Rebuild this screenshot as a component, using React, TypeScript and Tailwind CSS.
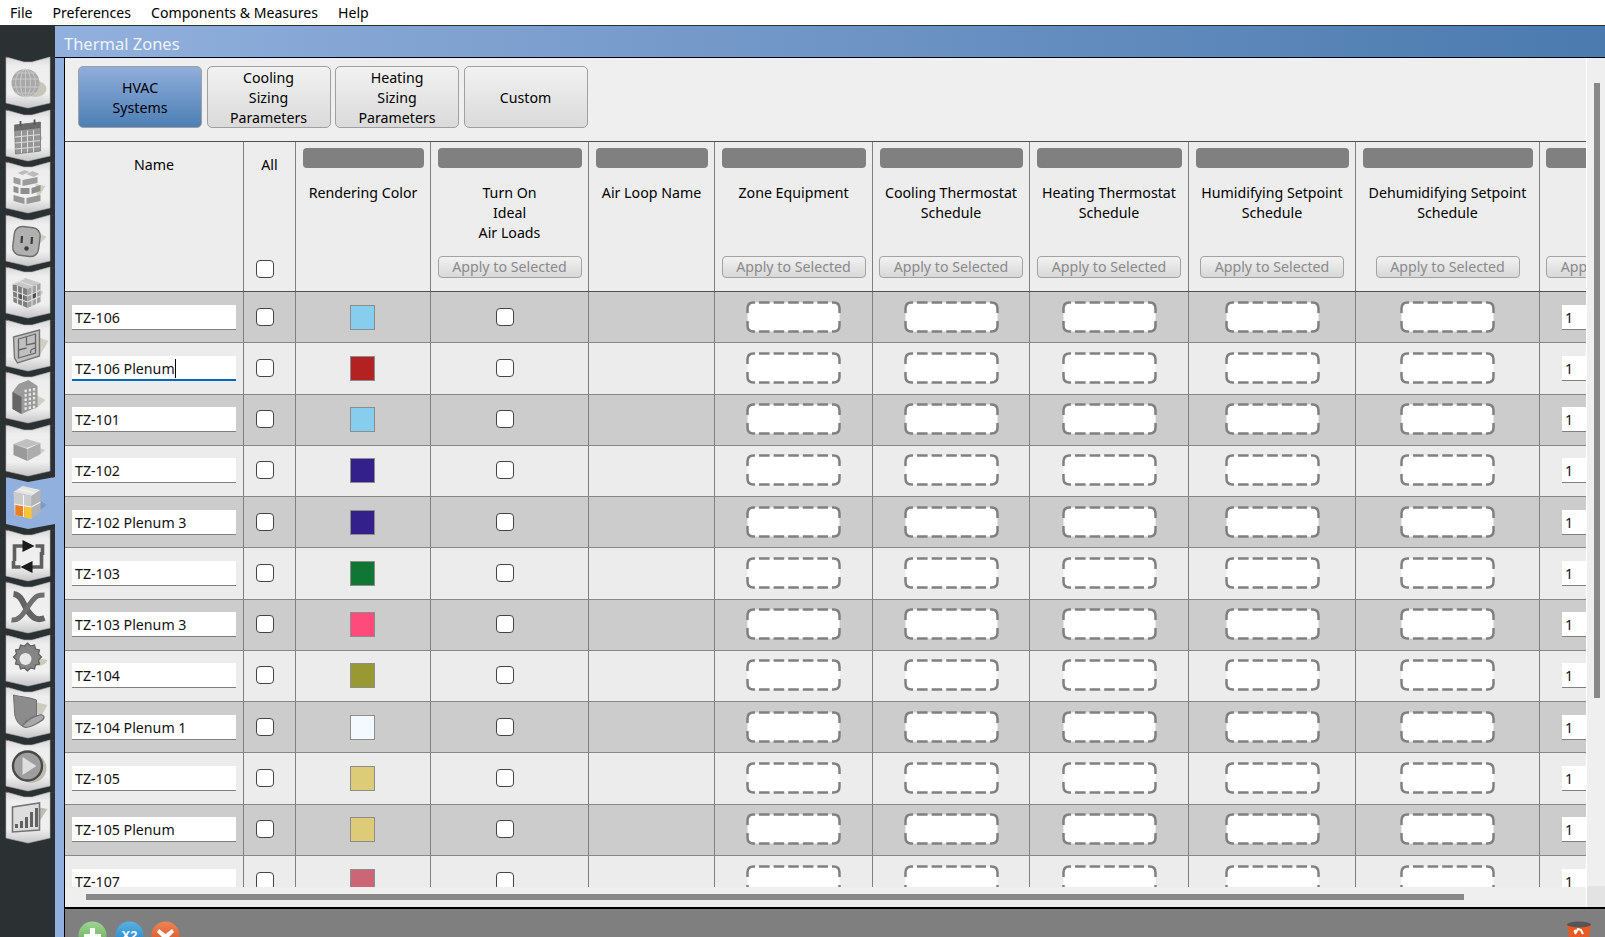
import React from "react";

const font = "[font-family:'Noto_Sans','Open_Sans',sans-serif]";

type Col = { w: string; title: string[]; apply: boolean; kind: string };
const cols: Col[] = [
  { w: "w-[135px]", title: ["Rendering Color"], apply: false, kind: "color" },
  { w: "w-[158px]", title: ["Turn On", "Ideal", "Air Loads"], apply: true, kind: "check" },
  { w: "w-[126px]", title: ["Air Loop Name"], apply: false, kind: "empty" },
  { w: "w-[158px]", title: ["Zone Equipment"], apply: true, kind: "drop" },
  { w: "w-[157px]", title: ["Cooling Thermostat", "Schedule"], apply: true, kind: "drop" },
  { w: "w-[159px]", title: ["Heating Thermostat", "Schedule"], apply: true, kind: "drop" },
  { w: "w-[167px]", title: ["Humidifying Setpoint", "Schedule"], apply: true, kind: "drop" },
  { w: "w-[184px]", title: ["Dehumidifying Setpoint", "Schedule"], apply: true, kind: "drop" },
];

const rows: { name: string; color: string; focus?: boolean }[] = [
  { name: "TZ-106", color: "bg-[#87ceee]" },
  { name: "TZ-106 Plenum", color: "bg-[#b22222]", focus: true },
  { name: "TZ-101", color: "bg-[#87ceee]" },
  { name: "TZ-102", color: "bg-[#34208a]" },
  { name: "TZ-102 Plenum 3", color: "bg-[#34208a]" },
  { name: "TZ-103", color: "bg-[#107636]" },
  { name: "TZ-103 Plenum 3", color: "bg-[#ff4a7c]" },
  { name: "TZ-104", color: "bg-[#999933]" },
  { name: "TZ-104 Plenum 1", color: "bg-[#f4f9ff]" },
  { name: "TZ-105", color: "bg-[#ddcc77]" },
  { name: "TZ-105 Plenum", color: "bg-[#ddcc77]" },
  { name: "TZ-107", color: "bg-[#cc6677]" },
];

function Check() {
  return <div className="w-[18px] h-[18px] shrink-0 rounded-[4px] border-[1.5px] border-[#444] bg-white" />;
}

function Dashed() {
  return (
    <svg width="95" height="32" viewBox="0 0 95 32" className="block shrink-0 -mt-[1px]">
      <rect x="1.500" y="1.500" width="92" height="29" rx="6" fill="#fff" />
      <g fill="none" stroke="#808080" strokeWidth="2.500">
        <path d="M1.500 12V7.500Q1.500 1.500 7.500 1.500H9M86 1.500H87.500Q93.500 1.500 93.500 7.500V12M93.500 20V24.500Q93.500 30.500 87.500 30.500H86M9 30.500H7.500Q1.500 30.500 1.500 24.500V20" />
        <path d="M13 1.500H82M13 30.500H82" strokeDasharray="10.600 4" />
      </g>
    </svg>
  );
}

function ApplyButton() {
  return (
    <div className="w-[144px] h-[22px] shrink-0 rounded-[4px] border border-[#a3a3a3] bg-gradient-to-b from-[#f2f2f2] to-[#d8d8d8] text-[#8a8a8a] text-[14.200px] leading-[20px] text-center whitespace-nowrap overflow-hidden">
      Apply to Selected
    </div>
  );
}

function HeaderCell({ c }: { c: Col }) {
  return (
    <div className={`${c.w} shrink-0 border-r border-[#808080] flex flex-col items-center pt-[6px]`}>
      <div className="w-full pl-[7px] pr-[6px]">
        <div className="h-[20px] rounded-[4px] bg-[#808080]" />
      </div>
      <div className="mt-[15px] text-center text-[14.200px] leading-[20px] text-black whitespace-nowrap">
        {c.title.map((t) => (
          <div key={t}>{t}</div>
        ))}
      </div>
      {c.apply && (
        <div className="mt-auto mb-[13px]">
          <ApplyButton />
        </div>
      )}
    </div>
  );
}

function Row({ r, i }: { r: (typeof rows)[number]; i: number }) {
  const bg = i % 2 === 0 ? "bg-[#cccccc]" : "bg-[#ececec]";
  return (
    <div className={`${bg} h-[51.27px] shrink-0 flex border-b-[1.5px] border-[#888888] text-[14.200px] text-[#111]`}>
      <div className="w-[179px] shrink-0 border-r border-[#808080] flex items-center pl-[6.500px]">
        <div
          className={`w-[164px] h-[25px] bg-white pl-[3.500px] leading-[25px] whitespace-nowrap ${
            r.focus ? "border-b-2 border-[#0067c0]" : "border-b-[1.5px] border-[#808080]"
          }`}
        >
          {r.focus ? <span className="border-r border-black">{r.name}</span> : r.name}
        </div>
      </div>
      <div className="w-[52px] shrink-0 border-r border-[#808080] flex items-center pl-[12px] pb-[1px]">
        <Check />
      </div>
      {cols.map((c) => (
        <div
          key={c.title[0]}
          className={`${c.w} shrink-0 border-r border-[#808080] flex items-center ${
            c.kind === "check" ? "pl-[65px] pb-[1px]" : c.kind === "color" ? "justify-center pr-[2px]" : "justify-center"
          }`}
        >
          {c.kind === "color" && <div className={`w-[25px] h-[25px] border-[1.5px] border-[#8d8d8d] ${r.color}`} />}
          {c.kind === "check" && <Check />}
          {c.kind === "drop" && <Dashed />}
        </div>
      ))}
      <div className="flex-1 flex items-center pl-[22px]">
        <div className="w-[60px] h-[25px] shrink-0 bg-white pl-[3px] leading-[25px] border-b-[1.5px] border-[#808080]">1</div>
      </div>
    </div>
  );
}

const G = ({ children }: { children: React.ReactNode }) => (
  <g filter="url(#soft)" transform="translate(1.5 0)">
    {children}
  </g>
);

const icons: React.ReactNode[] = [
  <G key="g">
    <ellipse cx="34" cy="32" rx="11" ry="8" fill="#c6c6ba" />
    <circle cx="24" cy="26" r="14" fill="#a8a8a8" />
    <g fill="none" stroke="#cfcfcf" strokeWidth="0.8">
      <ellipse cx="24" cy="26" rx="5" ry="14" />
      <ellipse cx="24" cy="26" rx="10" ry="14" />
      <path d="M10.500 22h27M10.500 30h27M13 16h22M13 36h22M24 12v28" />
    </g>
  </G>,
  <G key="c">
    <path d="M30 14l11 14-8 14z" fill="#cfcfc4" />
    <path d="M13 15l26-3v29l-25 3z" fill="#969696" stroke="#777" strokeWidth="0.8" />
    <path d="M13 15l26-3v6l-26 3z" fill="#6a6a6a" />
    <g stroke="#dedede" strokeWidth="1">
      <path d="M13.500 27l25-2.400M13.500 33l25-2.400M13.500 39l25-2.400M20 21v22M26 20.500v22M32 20v22" />
    </g>
    <path d="M19 11v5M33 9.500v5" stroke="#555" strokeWidth="1.800" />
  </G>,
  <G key="b">
    <path d="M34 22l10 2-8 13z" fill="#cfcfc4" />
    <path d="M16 11l7-3 5 2-7 3zM25 12l6-3 7 3-6 3z" fill="#bcbcbc" />
    <path d="M12 15l7 2v6l-7-2zM21 18l15-3v6l-15 3z" fill="#9c9c9c" />
    <path d="M12 24l5 1.500v6l-5-1.500zM19 26l9 0v6l-9 0zM30 26l9-3v6l-9 3z" fill="#8e8e8e" />
    <path d="M12 33l11 3v6l-11-3zM25 36l14-3v6l-14 3z" fill="#979797" />
  </G>,
  <G key="o">
    <path d="M34 16l11 6-10 10z" fill="#cfcfc4" />
    <rect x="12" y="12" width="26" height="29" rx="8" transform="rotate(7 25 26)" fill="#b0b0b0" stroke="#6e6e6e" strokeWidth="1.400" />
    <path d="M20.500 21l-0.500 7M30.500 22l-0.500 7" stroke="#3a3a3a" strokeWidth="2.200" />
    <circle cx="25" cy="33.500" r="2.200" fill="#3a3a3a" />
  </G>,
  <G key="q">
    <path d="M30 19l12 6-8 11z" fill="#cfcfc4" />
    <path d="M11 17l13-6 15 5-13 6z" fill="#c8c8c8" />
    <path d="M11 17l15 5v19l-14-6z" fill="#7e7e7e" />
    <path d="M26 22l13-6v19l-13 6z" fill="#a2a2a2" />
    <path d="M18 26l4 1.500v6l-4-1.500zM31 26l4-2v6l-4 2z" fill="#4e4e4e" />
    <g stroke="#e2e2e2" strokeWidth="1.100" fill="none">
      <path d="M16 19v18M21 20.500v19M11.500 24l14.500 5M12 30l14 5M30.500 20v19M35 18v19M26 29l13-6M26 35l13-6M17 14l14 5M23 11.500l-12 6" />
    </g>
  </G>,
  <G key="f">
    <path d="M36 17l11 4-11 18z" fill="#cfcfc4" />
    <path d="M12 17l26-7v26l-22 7-3-5z" fill="#c0c0c0" stroke="#777" strokeWidth="1.400" />
    <path d="M17 19l17-5v19l-17 5zM25 17v8l9-2M17 30l8-2M29 33c0-4 2-4 5-5" fill="none" stroke="#666" strokeWidth="1.300" />
  </G>,
  <G key="h">
    <path d="M33 22l11 6-11 10z" fill="#cfcfc4" />
    <path d="M11 20l6-8 10-4 9 6v21l-16 7-9-5z" fill="#9a9a9a" />
    <path d="M11 20l9 5v17l-9-5z" fill="#666" />
    <g fill="#e6e6e6">
      {[0, 1, 2, 3, 4].flatMap((r) =>
        [0, 1, 2].map((c) => <rect key={`${r}${c}`} x={23 + c * 4.2} y={16 + r * 4.4 + (2 - c) * 0.8} width="2.300" height="2.600" />)
      )}
    </g>
  </G>,
  <G key="x">
    <path d="M34 22l10 3-9 7z" fill="#cfcfc4" />
    <path d="M12 19l13-5 14 4-14 5z" fill="#c0c0c0" />
    <path d="M12 19l14 5v12l-14-6z" fill="#9a9a9a" />
    <path d="M26 24l13-6v11l-13 7z" fill="#adadad" />
  </G>,
  <G key="t">
    <path d="M34 20l11 8-10 8z" fill="#7f9bc4" />
    <path d="M12 15l9-6 18 4-9 6z" fill="#e4e4e4" />
    <path d="M12 15l18 4v23l-17-4z" fill="#cbcbcb" />
    <path d="M30 19l9-6v22l-9 7z" fill="#b3b3b3" />
    <path d="M14 28l9 1.500v10.500l-9-2z" fill="#ef7d22" />
    <path d="M23 29.500l7 1v11.500l-7-2z" fill="#fdc62e" />
    <path d="M22 18v22M12.500 27l17.500 3 9-5M17 12l16 4" stroke="#f4f4f4" strokeWidth="1.100" fill="none" />
  </G>,
  <G key="a">
    <path d="M13 31V16h11M40 22v15H26" fill="none" stroke="#5f5f5f" strokeWidth="3.600" />
    <path d="M34 16h7v9" fill="none" stroke="#5f5f5f" strokeWidth="3.600" />
    <path d="M12 31v6h7" fill="none" stroke="#5f5f5f" strokeWidth="3.600" />
    <path d="M21 10l12 6-12 6zM31 31l-12 6 12 6z" fill="#1a1a1a" />
  </G>,
  <G key="y">
    <path d="M12 12C21 13 22 24 27 30S35 39 43 36" fill="none" stroke="#636363" strokeWidth="6" />
    <path d="M10 38C19 39 23 29 29 21S37 13 43 13" fill="none" stroke="#6f6f6f" strokeWidth="5" />
  </G>,
  <G key="z">
    <path d="M32 26c5-3 10-2 14-1-2 5-8 7-14 5z" fill="#c6ccb8" />
    <path d="M23 11l3-3 3 3 4-1 1 4 4 1-1 4 3 3-3 3 1 4-4 1-1 4-4-1-3 3-3-3-4 1-1-4-4-1 1-4-3-3 3-3-1-4 4-1 1-4z" fill="#858585" stroke="#5e5e5e" strokeWidth="1.200" />
    <circle cx="24" cy="24" r="6" fill="#e8e8e8" />
  </G>,
  <G key="s">
    <path d="M34 15l12 3-9 16z" fill="#cbcbbf" />
    <path d="M12 8c7 2 16 2 23 5v16c-7 1-12 5-14 10-5-2-8-8-8-15z" fill="#8c8c8c" stroke="#6e6e6e" />
    <path d="M21 39c2 3 10 1 20-6 3-3 1-6-3-5-6 2-12 4-17 11z" fill="#a8a8a8" stroke="#707070" strokeWidth="1.200" />
  </G>,
  <G key="p">
    <circle cx="30" cy="28" r="15" fill="#bdbdb2" />
    <circle cx="26" cy="26" r="14.500" fill="#9e9e9e" stroke="#484848" strokeWidth="2.400" />
    <path d="M21 17l14 9-14 9z" fill="#dedede" />
  </G>,
  <G key="w">
    <path d="M36 15l10 2-10 15z" fill="#bdbdb2" />
    <path d="M11 15l27-4v27l-27 2z" fill="#dedede" stroke="#747474" strokeWidth="1.600" />
    <path d="M15 36v-4M20 36v-7M25 36v-11M30 35v-15M35 35v-19" stroke="#626262" strokeWidth="3" />
  </G>,
];

function SideTab({ i, children }: { i: number; children: React.ReactNode }) {
  const selected = i === 8;
  const id = `tabfill${i}`;
  return (
    <svg width="55" height="52.5" viewBox="0 0 55 52.5" className="block shrink-0 overflow-visible">
      <defs>
        <linearGradient id={id} x1="0" y1="0" x2="0" y2="1">
          <stop offset="0" stopColor="#d8d8d8" />
          <stop offset="0.18" stopColor="#eeeeee" />
          <stop offset="0.72" stopColor="#f0f0f0" />
          <stop offset="1" stopColor="#c6c6c6" />
        </linearGradient>
      </defs>
      {selected ? (
        <path d="M6 0L28 5 55 0V47L28 52 6 47Z" fill="#92b0dd" />
      ) : (
        <path d="M6 0L24 5H32L50 0V46L28 51 6 46Z" fill={`url(#${id})`} stroke="#b4b4b4" strokeWidth="0.600" />
      )}
      <rect x="6.500" y="0" width="1" height="1" fill="#c02020" />
      <rect x="52.500" y="0" width="1" height="1" fill="#c02020" />
      {children}
    </svg>
  );
}

function Footer() {
  return (
    <div className="flex-1 bg-[#7f7f7f] flex items-start pt-[12px] pl-[13px] overflow-hidden">
      <div className="flex gap-[7.500px]">
        <svg width="29" height="29" viewBox="0 0 29 29" className="block shrink-0">
          <defs>
            <linearGradient id="fg" x1="0" y1="0" x2="0" y2="1">
              <stop offset="0" stopColor="#9fd494" />
              <stop offset="1" stopColor="#5ba84c" />
            </linearGradient>
            <linearGradient id="fb" x1="0" y1="0" x2="0" y2="1">
              <stop offset="0" stopColor="#58b2e6" />
              <stop offset="1" stopColor="#1a7abc" />
            </linearGradient>
            <linearGradient id="fo" x1="0" y1="0" x2="0" y2="1">
              <stop offset="0" stopColor="#ee8454" />
              <stop offset="1" stopColor="#d8481c" />
            </linearGradient>
          </defs>
          <circle cx="14.500" cy="14.500" r="14" fill="url(#fg)" />
          <path d="M12 7h5v6h6v5h-6v6h-5v-6H6v-5h6z" fill="#fff" />
        </svg>
        <svg width="29" height="29" viewBox="0 0 29 29" className="block shrink-0">
          <circle cx="14.500" cy="14.500" r="14" fill="url(#fb)" />
          <text x="14.500" y="19" textAnchor="middle" fontSize="13" fontWeight="800" fill="#fff" fontFamily="'Liberation Sans',sans-serif">X2</text>
        </svg>
        <svg width="29" height="29" viewBox="0 0 29 29" className="block shrink-0">
          <circle cx="14.500" cy="14.500" r="14" fill="url(#fo)" />
          <path d="M8 8l6.500 5L21 8l2 3-5 5 5 5-3 3-5.500-5-5.500 5-3-3 5-5-5-5z" fill="#fff" />
        </svg>
      </div>
      <svg width="26" height="16" viewBox="0 0 26 16" className="block shrink-0 ml-auto mr-[13px]">
        <path d="M1 4h24l-2 12H3z" fill="#e85c24" />
        <ellipse cx="13" cy="3.500" rx="12" ry="3" fill="#555" />
        <path d="M9 13l3-5 3 1 2 4M8 11l2-2" fill="none" stroke="#fff" strokeWidth="2" />
      </svg>
    </div>
  );
}

export default function App() {
  return (
    <div className={`${font} w-[1605px] h-[937px] overflow-hidden flex flex-col bg-white text-black`}>
      <div className="h-[26px] shrink-0 bg-white border-b border-[#2b3033] flex items-center gap-[20px] pl-[10px] text-[14.100px] text-black">
        <span>File</span>
        <span>Preferences</span>
        <span>Components &amp; Measures</span>
        <span>Help</span>
      </div>
      <div className="flex-1 flex min-h-0">
        <div className="w-[55px] shrink-0 bg-[#2b3033] flex flex-col pt-[31px]">
          <svg width="0" height="0" className="block shrink-0">
            <defs>
              <filter id="soft" x="-10%" y="-10%" width="120%" height="120%">
                <feGaussianBlur stdDeviation="0.45" />
              </filter>
            </defs>
          </svg>
          {icons.map((ic, i) => (
            <SideTab key={i} i={i}>
              {ic}
            </SideTab>
          ))}
        </div>
        <div className="flex-1 min-w-0 flex flex-col bg-[#92b0dd]">
          <div className="h-[32px] shrink-0 bg-gradient-to-r from-[#92b0dd] to-[#4a7aae] border-b border-black pl-[9px] pt-[5px] text-[16.500px] leading-[26px] text-[#eef3fb]">
            Thermal Zones
          </div>
          <div className="flex-1 min-h-0 ml-[9px] border-l border-black flex flex-col">
            <div className="h-[851px] shrink-0 flex border-b-2 border-black bg-[#efefef]">
              <div className="w-[1521px] shrink-0 flex flex-col min-w-0 overflow-hidden">
                <div className="h-[83px] shrink-0 pt-[8px] pl-[13px] flex gap-[4.500px] text-[14.200px] leading-[20px] text-center">
                  {[
                    ["HVAC", "Systems"],
                    ["Cooling", "Sizing", "Parameters"],
                    ["Heating", "Sizing", "Parameters"],
                    ["Custom"],
                  ].map((b, i) => (
                    <div
                      key={b[0]}
                      className={`w-[124px] h-[62px] pt-[2px] rounded-[5px] border-[1.5px] border-[#a0a0a0] flex flex-col justify-center ${
                        i === 0 ? "bg-gradient-to-b from-[#90aedc] to-[#4d7fb3]" : "bg-gradient-to-b from-[#f2f2f2] to-[#dadada]"
                      }`}
                    >
                      {b.map((t) => (
                        <div key={t}>{t}</div>
                      ))}
                    </div>
                  ))}
                </div>
                <div className="h-[151px] shrink-0 flex bg-[#ededed] border-t border-b border-[#505050]">
                  <div className="w-[179px] shrink-0 border-r border-[#808080] text-center text-[14.200px] leading-[20px] pt-[13px]">Name</div>
                  <div className="w-[52px] shrink-0 border-r border-[#808080] flex flex-col items-center text-[14.200px] leading-[20px] pt-[13px]">
                    <div>All</div>
                    <div className="mt-auto mb-[13px] self-start ml-[12px]">
                      <Check />
                    </div>
                  </div>
                  {cols.map((c) => (
                    <HeaderCell key={c.title[0]} c={c} />
                  ))}
                  <div className="w-[143px] shrink-0 pl-[6px] pt-[6px] flex flex-col">
                    <div className="h-[20px] w-[143px] rounded-[4px] bg-[#808080]" />
                    <div className="mt-auto mb-[13px]">
                      <ApplyButton />
                    </div>
                  </div>
                </div>
                <div className="h-[595px] shrink-0 overflow-hidden flex flex-col">
                  {rows.map((r, i) => (
                    <Row key={r.name} r={r} i={i} />
                  ))}
                </div>
                <div className="flex-1 flex items-center pl-[21px] bg-[#efefef]">
                  <div className="w-[1378px] h-[6px] bg-[#888888]" />
                </div>
              </div>
              <div className="w-[19px] shrink-0 flex flex-col border-l border-white">
                <div className="flex-1 pt-[25px] pl-[7px]">
                  <div className="w-[6px] h-[615px] bg-[#888888]" />
                </div>
                <div className="h-[21px] shrink-0 bg-[#e3e3e3]" />
              </div>
            </div>
            <Footer />
          </div>
        </div>
      </div>
    </div>
  );
}
